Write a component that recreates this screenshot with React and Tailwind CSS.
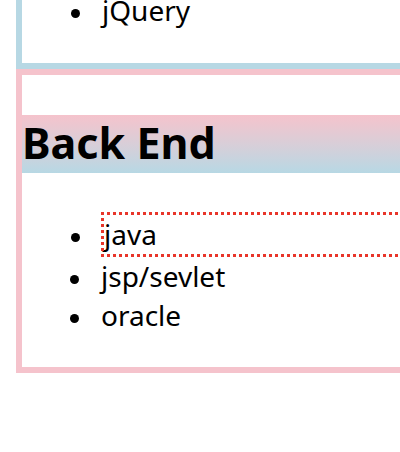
function Bullet({ bordered }) {
  return (
    <span
      className={
        bordered
          ? "-ml-[33px] mr-[24px] mt-[6px] h-[9px] w-[9px] shrink-0 rounded-full bg-black"
          : "-ml-[31px] mr-[22px] mt-[6px] h-[9px] w-[9px] shrink-0 rounded-full bg-black"
      }
    />
  );
}

function Item({ children }) {
  return (
    <li className="flex items-center">
      <Bullet />
      {children}
    </li>
  );
}

function DottedItem({ children }) {
  // square 3px dots, like the reference's dotted outline
  return (
    <li className="relative flex items-center border-[3px] border-transparent">
      <svg className="absolute -top-[3px] -left-[3px] h-[3px] w-[calc(100%+6px)]" aria-hidden="true">
        <line x1="0" y1="1.5" x2="100%" y2="1.5" stroke="#e8352a" strokeWidth="3" strokeDasharray="3 3" />
      </svg>
      <svg className="absolute -bottom-[3px] -left-[3px] h-[3px] w-[calc(100%+6px)]" aria-hidden="true">
        <line x1="0" y1="1.5" x2="100%" y2="1.5" stroke="#e8352a" strokeWidth="3" strokeDasharray="3 3" />
      </svg>
      <svg className="absolute -top-[3px] -left-[3px] h-[calc(100%+6px)] w-[3px]" aria-hidden="true">
        <line x1="1.5" y1="0" x2="1.5" y2="100%" stroke="#e8352a" strokeWidth="3" strokeDasharray="3 3" />
      </svg>
      <Bullet bordered />
      {children}
    </li>
  );
}

export default function App() {
  return (
    <div className="h-[452px] w-[400px] overflow-hidden bg-white font-['Noto_Sans','Noto_Sans_CJK_KR',sans-serif] text-black">
      <div className="ml-4 w-[700px]">
        {/* Front End (tail) */}
        <div className="border-[6px] border-t-0 border-[#b7d8e4] pb-[33px]">
          <ul className="-mt-[9px] pl-[80px] text-[28px] leading-[39px]">
            <Item>jQuery</Item>
          </ul>
        </div>

        {/* Back End */}
        <div className="border-[6px] border-[#f5c3cc] pt-[40px] pb-[32px]">
          <h2 className="h-[58px] bg-gradient-to-b from-[#f5c3cc] to-[#b7d8e4] text-[43px] font-bold leading-[56px]">
            Back End
          </h2>
          <ul className="mt-[39px] pl-[79px] text-[28px] leading-[39px]">
            <DottedItem>java</DottedItem>
            <Item>jsp/sevlet</Item>
            <Item>oracle</Item>
          </ul>
        </div>
      </div>
    </div>
  );
}
